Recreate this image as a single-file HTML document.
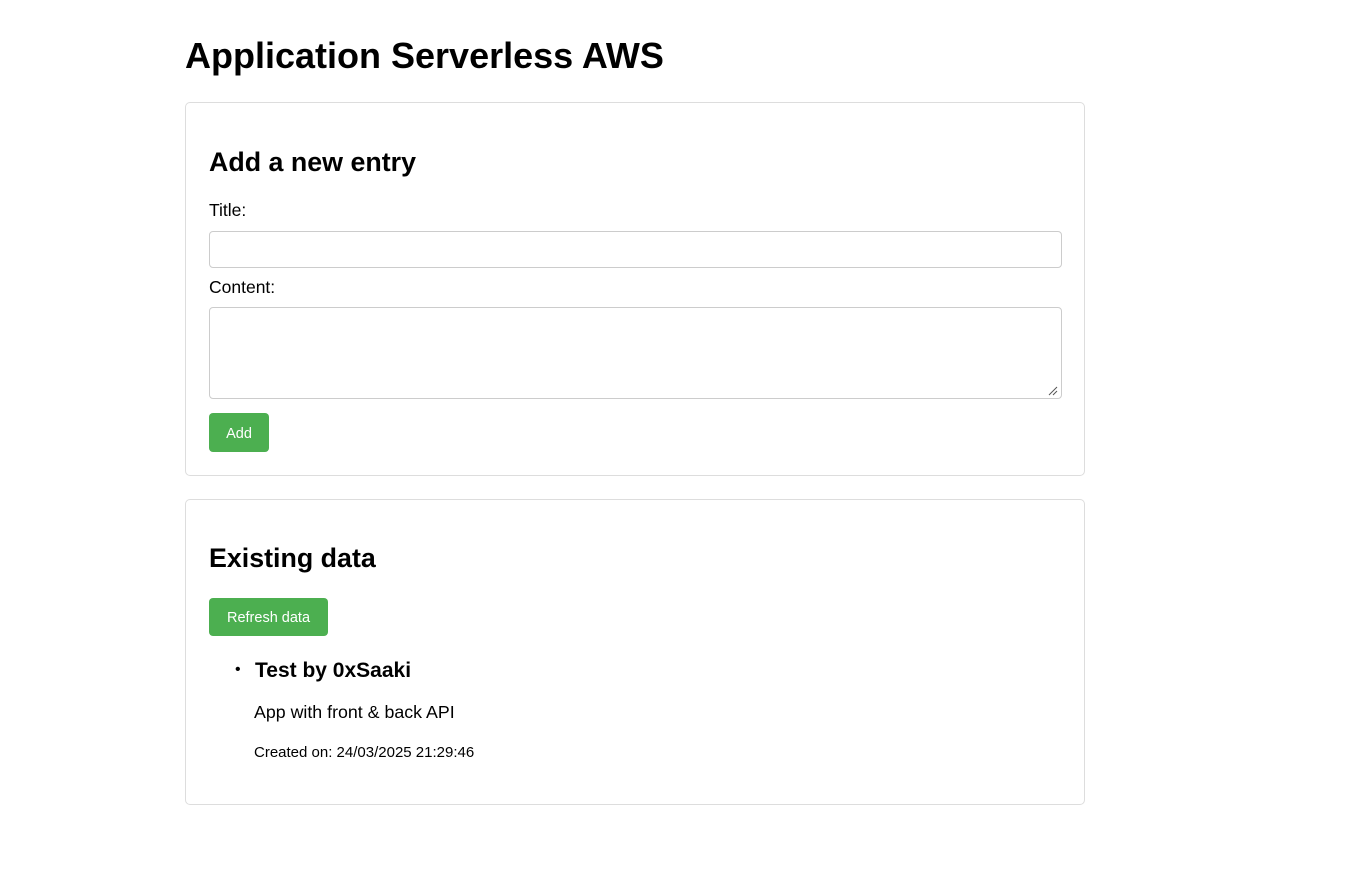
<!DOCTYPE html>
<html><head><meta charset="utf-8"><style>
body{margin:0;background:#fff;font-family:"Liberation Sans",Arial,sans-serif;color:#000;}
.a{position:absolute;white-space:nowrap;}
.card{position:absolute;left:185px;width:898px;border:1px solid #ddd;border-radius:5px;}
.inp{position:absolute;left:209px;width:851px;border:1px solid #ccc;border-radius:4px;}
.btn{position:absolute;left:209px;background:#4CAF50;color:#fff;border-radius:4px;font-size:14.5px;text-align:center;}
</style></head><body>
<div class="a" style="left:185px;top:35px;font-size:36px;font-weight:bold;line-height:42px">Application Serverless AWS</div>
<div class="card" style="top:102px;height:372px"></div>
<div class="a" style="left:209px;top:147px;font-size:26.8px;font-weight:bold;line-height:30px">Add a new entry</div>
<div class="a" style="left:209px;top:201px;font-size:17.5px;line-height:18px">Title:</div>
<div class="inp" style="top:231px;height:35px"></div>
<div class="a" style="left:209px;top:278px;font-size:17.5px;line-height:18px">Content:</div>
<div class="inp" style="top:307px;height:90px"></div>
<svg class="a" style="left:1048px;top:386px" width="10" height="10"><path d="M1 9L9 1M5 9L9 5" stroke="#555" stroke-width="1"/></svg>
<div class="btn" style="top:413px;width:60px;height:39px;line-height:43px">Add</div>
<div class="card" style="top:499px;height:304px"></div>
<div class="a" style="left:209px;top:543px;font-size:26.8px;font-weight:bold;line-height:30px">Existing data</div>
<div class="btn" style="top:598px;width:119px;height:38px;line-height:41px">Refresh data</div>
<div class="a" style="left:235px;top:661px;font-size:16px;line-height:18px">•</div>
<div class="a" style="left:255px;top:659px;font-size:21px;font-weight:bold;line-height:23px">Test by 0xSaaki</div>
<div class="a" style="left:254px;top:703px;font-size:17.8px;line-height:18px">App with front &amp; back API</div>
<div class="a" style="left:254px;top:744px;font-size:15px;line-height:17px">Created on: 24/03/2025 21:29:46</div>
</body></html>
